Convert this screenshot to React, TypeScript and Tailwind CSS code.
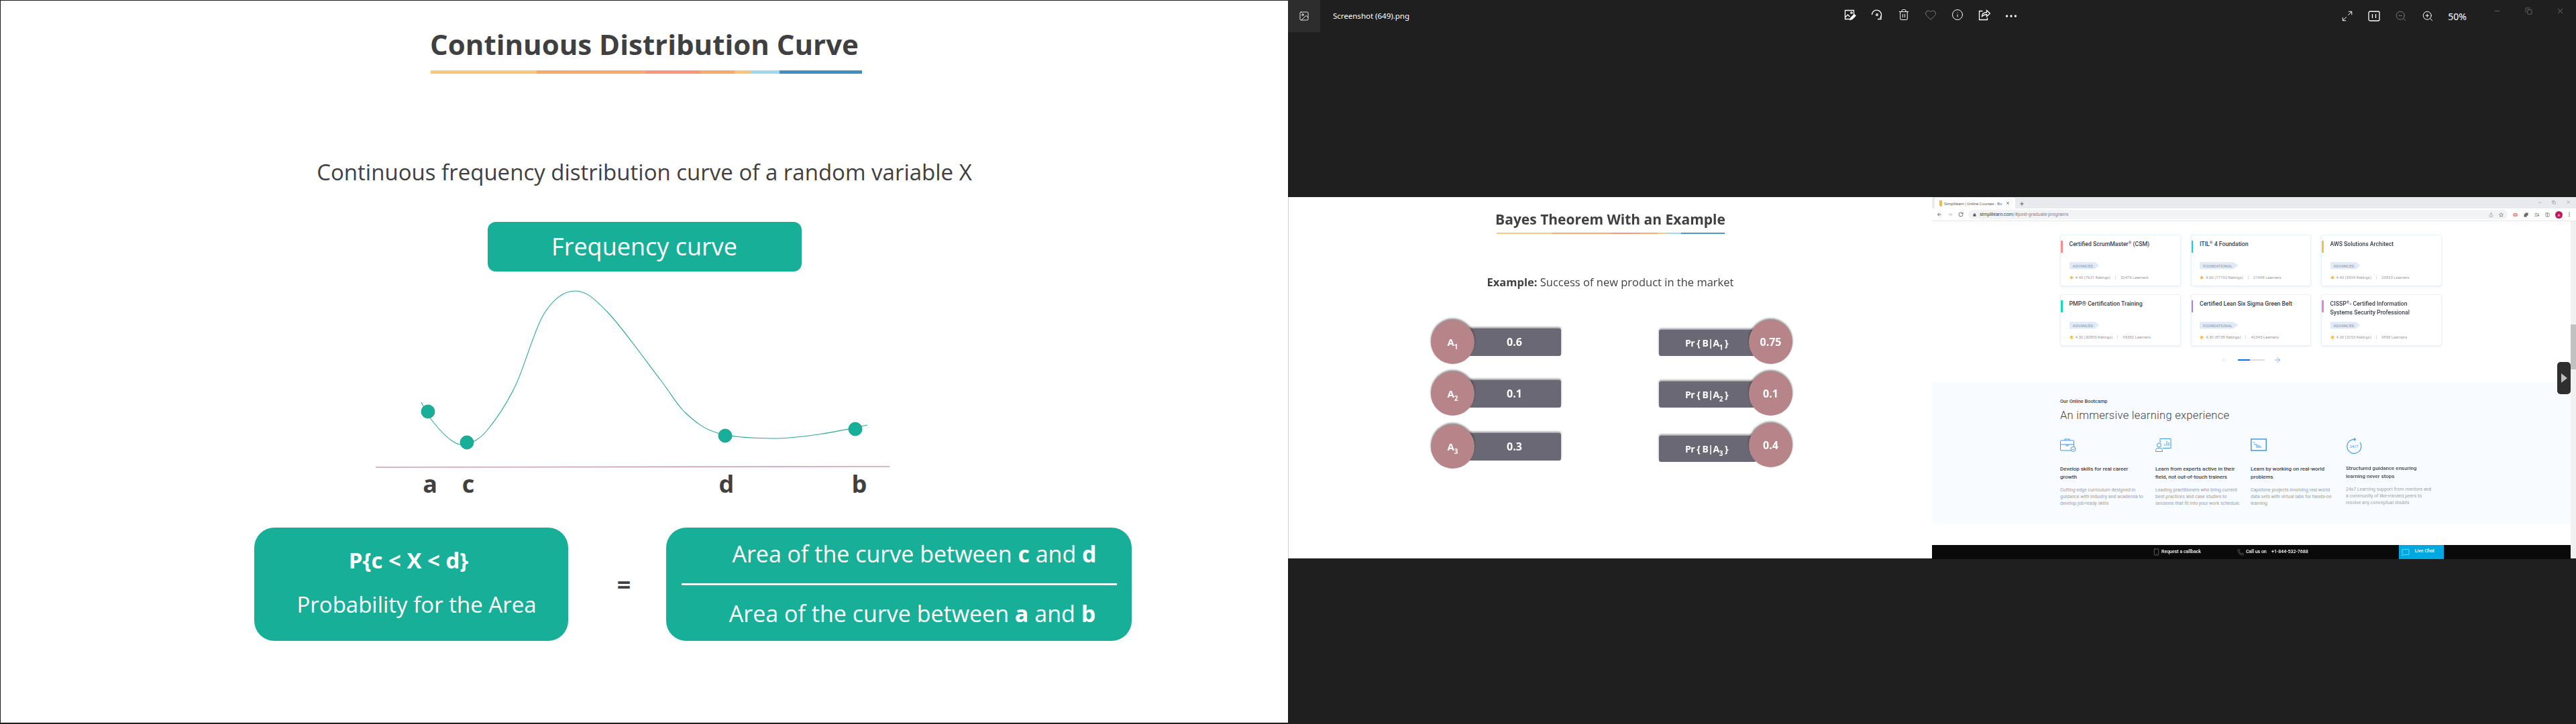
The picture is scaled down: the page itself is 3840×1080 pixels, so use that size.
import {
  ArrowLeft,
  ArrowRight,
  Columns2,
  Copy,
  Ellipsis,
  Heart,
  Image,
  Info,
  ListMusic,
  Lock,
  Maximize2,
  MessageSquare,
  Minus,
  MoreVertical,
  Phone,
  Plus,
  Puzzle,
  RotateCw,
  Share,
  Smartphone,
  Star,
  Trash2,
  X,
  ZoomIn,
  ZoomOut,
} from 'lucide-react';

const underlineBig = [
  ['w-[158px]', 'bg-[#fdc578]'],
  ['w-[162px]', 'bg-[#fba86c]'],
  ['w-[82px]', 'bg-[#fd9577]'],
  ['w-[51px]', 'bg-[#fba86c]'],
  ['w-[25px]', 'bg-[#fdc578]'],
  ['w-[42px]', 'bg-[#a0d8ee]'],
  ['w-[123px]', 'bg-[#3f8fc0]'],
];

const underlineSmall = [
  ['w-[83px]', 'bg-[#fdc578]'],
  ['w-[88px]', 'bg-[#fba86c]'],
  ['w-[42px]', 'bg-[#fd9577]'],
  ['w-[27px]', 'bg-[#fba86c]'],
  ['w-[13px]', 'bg-[#fdc578]'],
  ['w-[22px]', 'bg-[#a0d8ee]'],
  ['w-[65px]', 'bg-[#4a9acb]'],
];

const curvePoints = [
  [627, 600], [642, 626], [672, 657], [695, 662], [725, 642], [767, 576], [810, 468], [856, 434],
  [905, 466], [983, 566], [1021, 616], [1069, 646], [1150, 654], [1222, 647.5], [1292, 634],
];

// catmull-rom through the points read off the picture
function smooth(pts: number[][]) {
  let d = `M${pts[0][0]} ${pts[0][1]}`;
  for (let i = 0; i < pts.length - 1; i++) {
    const p0 = pts[Math.max(i - 1, 0)];
    const p1 = pts[i];
    const p2 = pts[i + 1];
    const p3 = pts[Math.min(i + 2, pts.length - 1)];
    const c1x = p1[0] + (p2[0] - p0[0]) / 6;
    const c1y = p1[1] + (p2[1] - p0[1]) / 6;
    const c2x = p2[0] - (p3[0] - p1[0]) / 6;
    const c2y = p2[1] - (p3[1] - p1[1]) / 6;
    d += ` C${c1x} ${c1y} ${c2x} ${c2y} ${p2[0]} ${p2[1]}`;
  }
  return d;
}

const dots = [
  [637, 614],
  [695, 660],
  [1080, 650],
  [1274, 640],
];

function Sub({ n }: { n: number }) {
  return <sub className="text-[10px] leading-none align-[-3px]">{n}</sub>;
}

function EditImageIcon() {
  return (
    <svg width="18" height="18" viewBox="0 0 18 18" fill="none" stroke="currentColor" strokeWidth="1.3">
      <path d="M9 15.5H1.5v-13h13V8" />
      <path d="M1.5 13l4-4 3 3" />
      <circle cx="11" cy="6" r="1.2" />
      <path d="M9 16.5l1-3 5-5 2 2-5 5z" fill="currentColor" />
    </svg>
  );
}

function RotateIcon() {
  return (
    <svg width="18" height="18" viewBox="0 0 18 18" fill="none" stroke="currentColor" strokeWidth="1.3">
      <path d="M1.5 9a7 7 0 1 1 12 5" />
      <path d="M15 10.5v5h-5" />
      <circle cx="9" cy="9" r="1.3" />
    </svg>
  );
}

function ShareIcon() {
  return (
    <svg width="18" height="18" viewBox="0 0 18 18" fill="none" stroke="currentColor" strokeWidth="1.3">
      <path d="M6.5 3.5h-5v13h12v-3" />
      <path d="M5.5 11.5c0-4 3-6 7-6V2.5l5 4.5-5 4.5V8.5c-3 0-5 1-7 3z" />
    </svg>
  );
}

function FitIcon() {
  return (
    <svg width="18" height="18" viewBox="0 0 18 18" fill="none" stroke="currentColor" strokeWidth="1.3">
      <rect x="1" y="2" width="16" height="14" rx="2" />
      <path d="M6.5 6v6M11.5 6v6" />
    </svg>
  );
}

const bayesLeft = [
  { n: 1, v: '0.6', cls: 'mt-[42px]' },
  { n: 2, v: '0.1', cls: 'mt-[11px]' },
  { n: 3, v: '0.3', cls: 'mt-[13px]' },
];

const bayesRight = [
  { n: 1, v: '0.75', cls: 'mt-[42px]', barCls: 'translate-y-[1px]' },
  { n: 2, v: '0.1', cls: 'mt-[11px]', barCls: 'translate-y-[1px]' },
  { n: 3, v: '0.4', cls: 'mt-[11px]', barCls: 'translate-y-[5px]' },
];

const courses = [
  { title: <>Certified ScrumMaster<sup className="text-[6px]">®</sup> (CSM)</>, level: 'ADVANCED', rating: '4.40 (7621 Ratings)', learners: '32476 Learners', accent: 'bg-[#fc8c8c]' },
  { title: <>ITIL<sup className="text-[6px]">®</sup> 4 Foundation</>, level: 'FOUNDATIONAL', rating: '4.60 (17192 Ratings)', learners: '21498 Learners', accent: 'bg-[#10cfe8]' },
  { title: <>AWS Solutions Architect</>, level: 'ADVANCED', rating: '4.40 (5594 Ratings)', learners: '23833 Learners', accent: 'bg-[#f5c242]' },
  { title: <>PMP® Certification Training</>, level: 'ADVANCED', rating: '4.30 (30895 Ratings)', learners: '95382 Learners', accent: 'bg-[#10dcb8]' },
  { title: <>Certified Lean Six Sigma Green Belt</>, level: 'FOUNDATIONAL', rating: '4.30 (8738 Ratings)', learners: '42345 Learners', accent: 'bg-[#a67cf0]' },
  { title: <>CISSP<sup className="text-[6px]">®</sup>- Certified Information<br />Systems Security Professional</>, level: 'ADVANCED', rating: '4.30 (3253 Ratings)', learners: '9858 Learners', accent: 'bg-[#ef7fd5]' },
];

const features = [
  {
    title: 'Develop skills for real career growth',
    text: 'Cutting-edge curriculum designed in guidance with industry and academia to develop job-ready skills',
    icon: (
      <svg width="24" height="20" viewBox="0 0 24 20" fill="none" stroke="#3d9be9" strokeWidth="1">
        <rect x="0.5" y="3" width="20" height="15" rx="1" />
        <path d="M7 3V1h7v2M0.5 9h20M9 9v2h3V9" />
        <circle cx="19.5" cy="16" r="3.5" fill="#f8fbff" />
        <path d="M18 16l1.2 1.2 2-2.2" />
      </svg>
    ),
  },
  {
    title: 'Learn from experts active in their field, not out-of-touch trainers',
    text: 'Leading practitioners who bring current best practices and case studies to sessions that fit into your work schedule.',
    icon: (
      <svg width="24" height="20" viewBox="0 0 24 20" fill="none" stroke="#3d9be9" strokeWidth="1">
        <path d="M7 0.5h16v14H11" />
        <path d="M7 0.5v6M14 11V8M17 11V4M20 11V6" />
        <circle cx="5.5" cy="10" r="3" />
        <path d="M0.5 19.5v-2c0-2 2-3 5-3s5 1 5 3v2z" />
      </svg>
    ),
  },
  {
    title: 'Learn by working on real-world problems',
    text: 'Capstone projects involving real world data sets with virtual labs for hands-on learning',
    icon: (
      <svg width="24" height="20" viewBox="0 0 24 20" fill="none" stroke="#3d9be9">
        <rect x="0.75" y="1" width="22.5" height="17" strokeWidth="1.5" />
        <path d="M4 6h2M5 9h5M8 11h6M8 13h8" strokeWidth="1" />
      </svg>
    ),
  },
  {
    title: 'Structured guidance ensuring learning never stops',
    text: '24x7 Learning support from mentors and a community of like-minded peers to resolve any conceptual doubts',
    icon: (
      <svg width="24" height="24" viewBox="0 0 24 24" fill="none" stroke="#3d9be9" strokeWidth="1.2" className="-mt-[1px]">
        <path d="M14 2.5A10.5 10.5 0 1 0 21 7" />
        <path d="M12 0.5l2.5 2-2 2.2" />
        <text x="12" y="14.5" textAnchor="middle" fontSize="6" fill="#3d9be9" stroke="none" fontFamily="Roboto">24/7</text>
      </svg>
    ),
  },
];

function Course({ c }: { c: (typeof courses)[number] }) {
  return (
    <div className="relative w-[179.5px] h-[77px] bg-white border border-[#e9f1fb] rounded-[3px] shadow-[0_1px_3px_rgba(120,160,220,0.2)] pl-[12.5px] pt-[7px]">
      <div className={`absolute left-0 top-[7.5px] w-[2.5px] h-[18px] ${c.accent}`} />
      <div className="h-[26px] text-[8.7px] leading-[13px] font-medium text-[#3a3f4a] pr-[20px]">{c.title}</div>
      <div className="mt-[6.5px] h-[11px] w-fit pl-[5px] pr-[9px] flex items-center bg-[#e0ebf7] text-[6px] text-[#8a94a6] [clip-path:polygon(0_0,85%_0,100%_50%,85%_100%,0_100%)]">
        {c.level}
      </div>
      <div className="mt-[8.5px] flex items-center text-[6px] leading-[8px] text-[#9a9a9a]">
        <Star className="w-[6px] h-[6px] text-[#fbb93c] mr-[3px]" fill="#fbb93c" />
        <span>{c.rating}</span>
        <span className="mx-[7px] w-px h-[6px] bg-[#dcdcdc]" />
        <span>{c.learners}</span>
      </div>
    </div>
  );
}

export default function App() {
  return (
    <div className="flex w-[3840px] h-[1080px] overflow-hidden bg-[#1f1f1f] font-['Open_Sans',sans-serif]">
      {/* left slide */}
      <div className="w-[1920px] h-[1080px] shrink-0 bg-white border-l border-t border-b-2 border-[#1f1f1f] flex flex-col items-center text-[#404040]">
        <h1 className="mt-[35px] text-[42px] leading-[60px] font-bold">Continuous Distribution Curve</h1>
        <div className="self-start ml-[641px] mt-[9px] flex h-[5px]">
          {underlineBig.map(([w, c], i) => (
            <div key={i} className={`${w} ${c}`} />
          ))}
        </div>
        <p className="mt-[124px] text-[33px] leading-[46px]">Continuous frequency distribution curve of a random variable X</p>
        <div className="mt-[51px] w-[468px] h-[74px] rounded-[12px] bg-[#17af98] flex items-center justify-center text-white text-[36px]">
          Frequency curve
        </div>

        <svg width="1920" height="345" viewBox="0 405 1920 345" className="shrink-0">
          <path d={smooth(curvePoints)} fill="none" stroke="#2aa896" strokeWidth="1.1" />
          {dots.map(([x, y]) => (
            <circle key={x} cx={x} cy={y} r="10" fill="#17af98" stroke="#109582" strokeWidth="0.8" />
          ))}
          <line x1="559" y1="697" x2="1325" y2="696" stroke="#c9a3aa" strokeWidth="1.6" />
          <g fontFamily="Open Sans" fontWeight="700" fontSize="36" fill="#404040" textAnchor="middle">
            <text x="640" y="735">a</text>
            <text x="697" y="735">c</text>
            <text x="1082" y="735">d</text>
            <text x="1280" y="735">b</text>
          </g>
        </svg>

        <div className="self-start ml-[378px] mt-[37px] flex items-center text-white">
          <div className="w-[468px] h-[169px] rounded-[30px] bg-[#17af98] flex flex-col items-center text-[33px]">
            <div className="mt-[26px] h-[46px] leading-[46px] font-bold pr-[8px]">P{'{'}c &lt; X &lt; d{'}'}</div>
            <div className="mt-[20px] h-[46px] leading-[46px] pl-[16px]">Probability for the Area</div>
          </div>
          <div className="w-[146px] pl-[20px] text-center text-[36px] font-bold text-[#404040]">=</div>
          <div className="w-[694px] h-[169px] rounded-[30px] bg-[#17af98] flex flex-col items-center text-[34px]">
            <div className="mt-[16px] h-[46px] leading-[46px] pl-[46px]">
              Area of the curve between <b>c</b> and <b>d</b>
            </div>
            <div className="mt-[21px] w-[649px] h-[3px] bg-[#eafaf6]" />
            <div className="mt-[19px] h-[46px] leading-[46px] pl-[40px]">
              Area of the curve between <b>a</b> and <b>b</b>
            </div>
          </div>
        </div>
      </div>

      {/* photos viewer */}
      <div className="w-[1920px] h-[1080px] shrink-0 flex flex-col">
        <div className="h-[48px] flex items-center text-white shrink-0">
          <div className="w-[48px] h-[48px] bg-[#2d2d2d] flex items-center justify-center">
            <Image className="w-[16px] h-[16px]" strokeWidth={1.3} />
          </div>
          <div className="ml-[19px] w-[752px] text-[11.5px] font-['Noto_Sans',sans-serif] leading-[20px]">Screenshot (649).png</div>
          <div className="flex w-[280px]">
            <div className="w-[40px] flex justify-center"><EditImageIcon /></div>
            <div className="w-[40px] flex justify-center"><RotateIcon /></div>
            <div className="w-[40px] flex justify-center"><Trash2 className="w-[18px] h-[18px]" strokeWidth={1.3} /></div>
            <div className="w-[40px] flex justify-center"><Heart className="w-[18px] h-[18px] text-[#7a7a7a]" strokeWidth={1.3} /></div>
            <div className="w-[40px] flex justify-center"><Info className="w-[18px] h-[18px]" strokeWidth={1.3} /></div>
            <div className="w-[40px] flex justify-center"><ShareIcon /></div>
            <div className="w-[40px] flex justify-center"><Ellipsis className="w-[22px] h-[22px]" strokeWidth={1.6} /></div>
          </div>
          <div className="ml-[461px] flex w-[160px]">
            <div className="w-[40px] flex justify-center"><Maximize2 className="w-[18px] h-[18px]" strokeWidth={1.3} /></div>
            <div className="w-[40px] flex justify-center"><FitIcon /></div>
            <div className="w-[40px] flex justify-center"><ZoomOut className="w-[18px] h-[18px] text-[#7a7a7a]" strokeWidth={1.3} /></div>
            <div className="w-[40px] flex justify-center"><ZoomIn className="w-[18px] h-[18px]" strokeWidth={1.3} /></div>
          </div>
          <div className="w-[48px] text-center text-[14px] font-['Noto_Sans',sans-serif]">50%</div>
          <div className="ml-[12px] self-start h-[32px] flex items-center text-[#9a9a9a]">
            <div className="w-[47px] flex justify-center"><Minus className="w-[11px] h-[11px]" strokeWidth={1.2} /></div>
            <div className="w-[47px] flex justify-center"><Copy className="w-[11px] h-[11px]" strokeWidth={1.2} /></div>
            <div className="w-[47px] flex justify-center"><X className="w-[13px] h-[13px]" strokeWidth={1.2} /></div>
          </div>
        </div>

        <div className="mt-[246px] flex h-[539px] shrink-0">
          {/* bayes slide */}
          <div className="w-[960px] h-[539px] bg-white border-l border-[#d0d0d0] flex flex-col items-center text-[#404040] blur-[0.3px]">
            <div className="mt-[17px] h-[32px] text-[21px] leading-[32px] font-bold whitespace-nowrap">Bayes Theorem With an Example</div>
            <div className="mt-[4px] flex h-[2px]">
              {underlineSmall.map(([w, c], i) => (
                <div key={i} className={`${w} ${c}`} />
              ))}
            </div>
            <div className="mt-[58px] text-[16.5px] leading-[28px] whitespace-nowrap">
              <b>Example:</b> Success of new product in the market
            </div>
            <div className="self-start flex">
              <div className="ml-[212px] w-[195px] flex flex-col">
                {bayesLeft.map(r => (
                  <div key={r.n} className={`flex items-center h-[66px] ${r.cls}`}>
                    <div className="z-10 w-[65px] h-[66px] rounded-full bg-[#b78589] shadow-[0_-2px_3px_rgba(0,0,0,0.45)] flex items-center justify-center text-white font-bold text-[15px]">
                      <span>A<Sub n={r.n} /></span>
                    </div>
                    <div className="-ml-[10px] w-[139px] h-[41px] rounded-[3px] bg-[#6b6875] shadow-[0_-2px_3px_rgba(0,0,0,0.4)] flex items-center justify-center text-white font-bold text-[16px]">
                      {r.v}
                    </div>
                  </div>
                ))}
              </div>
              <div className="ml-[145px] w-[200px] flex flex-col">
                {bayesRight.map(r => (
                  <div key={r.n} className={`flex items-center h-[66px] ${r.cls}`}>
                    <div className={`w-[145px] h-[39px] rounded-[3px] bg-[#6b6875] shadow-[0_-2px_3px_rgba(0,0,0,0.4)] flex items-center pl-[39px] text-white font-bold text-[14px] tracking-[-0.5px] whitespace-nowrap ${r.barCls}`}>
                      <span>Pr {'{'} B|A<Sub n={r.n} /> {'}'}</span>
                    </div>
                    <div className="z-10 -ml-[11px] w-[65px] h-[66px] shrink-0 rounded-full bg-[#b78589] shadow-[0_-2px_3px_rgba(0,0,0,0.45)] flex items-center justify-center text-white font-bold text-[16px]">
                      {r.v}
                    </div>
                  </div>
                ))}
              </div>
            </div>
          </div>

          {/* browser screenshot */}
          <div className="w-[960px] h-[539px] flex flex-col bg-white font-['Roboto',sans-serif] blur-[0.35px]">
            <div className="h-[17px] bg-[#e8eaed] flex items-end shrink-0">
              <div className="ml-[4px] w-[120px] h-[16px] bg-white rounded-t-[4px] flex items-center pl-[7px] text-[6px] text-[#5f6368]">
                <span className="w-[4px] h-[9px] mr-[3px] rounded-b-[2px] border-x-2 border-b border-x-[#f5b942] border-b-[#6db7e8]" />
                <span className="w-[90px] whitespace-nowrap">Simplilearn | Online Courses - Bo</span>
                <X className="ml-[2px] w-[6px] h-[6px] text-[#45474a]" strokeWidth={3} />
              </div>
              <Plus className="ml-[6px] mb-[3px] w-[8px] h-[8px] text-[#45474a]" strokeWidth={2.5} />
              <div className="ml-auto flex items-center gap-[15px] pr-[8px] mb-[2px] text-[#7d7f83] self-center">
                <Minus className="w-[6px] h-[6px]" />
                <Copy className="w-[6px] h-[6px]" />
                <X className="w-[7px] h-[7px]" />
              </div>
            </div>
            <div className="h-[19px] flex items-center border-b border-[#e4e6e8] shrink-0">
              <ArrowLeft className="ml-[7px] w-[8px] h-[8px] text-[#55585c]" strokeWidth={2.5} />
              <ArrowRight className="ml-[8px] w-[8px] h-[8px] text-[#b6b8bc]" strokeWidth={2.5} />
              <RotateCw className="ml-[8px] w-[8px] h-[8px] text-[#55585c]" strokeWidth={2.5} />
              <div className="ml-[7px] w-[804px] h-[14px] rounded-full bg-[#f1f3f4] flex items-center pl-[7px] text-[7px] text-[#80868b]">
                <Lock className="w-[5px] h-[5px] text-[#55585c] mr-[5px]" fill="#55585c" />
                <span className="text-[#3c4043]">simplilearn.com</span>/#post-graduate-programs
                <Share className="ml-auto w-[7px] h-[7px]" />
                <Star className="ml-[8px] mr-[6px] w-[7px] h-[7px] text-[#45474a]" />
              </div>
              <div className="ml-[8px] flex items-center gap-[9px] text-[#55585c]">
                <span className="w-[7px] h-[5px] rounded-full border-2 border-[#f98a8a]" />
                <Puzzle className="w-[7px] h-[7px]" fill="#55585c" />
                <ListMusic className="w-[7px] h-[7px]" />
                <Columns2 className="w-[7px] h-[7px]" />
                <span className="w-[11px] h-[11px] -ml-[1px] rounded-full bg-[#c2185b] text-white text-[6px] flex items-center justify-center">A</span>
                <MoreVertical className="-ml-[3px] w-[8px] h-[8px]" />
              </div>
            </div>

            <div className="relative flex flex-1 min-h-0">
              <div className="w-[952px] flex flex-col">
                <div className="ml-[191px] mt-[20px] grid grid-cols-[179.5px_179.5px_179.5px] gap-x-[15px] gap-y-[12px]">
                  {courses.map((c, i) => (
                    <Course key={i} c={c} />
                  ))}
                </div>
                <div className="ml-[430px] mt-[15px] h-[12px] flex items-center">
                  <ArrowLeft className="w-[12px] h-[12px] text-[#c9dcf5]" strokeWidth={1.2} />
                  <div className="ml-[14px] w-[40px] h-[2px] bg-[#dddddd]">
                    <div className="w-[18px] h-[2px] bg-[#0a6fe8]" />
                  </div>
                  <ArrowRight className="ml-[13px] w-[12px] h-[12px] text-[#1e80f0]" strokeWidth={1.2} />
                </div>
                <div className="mt-[27px] h-[211px] bg-[#f8fbff] pl-[191px] pt-[24px] shrink-0">
                  <div className="text-[7.4px] leading-[10px] font-medium text-[#444]">Our Online Bootcamp</div>
                  <div className="mt-[5px] text-[16.5px] leading-[22px] font-light tracking-[0.3px] text-[#444]">An immersive learning experience</div>
                  <div className="mt-[23px] grid grid-cols-[142px_142px_142px_142px]">
                    {features.map(f => (
                      <div key={f.title} className="pr-[14px]">
                        <div className="h-[20px]">{f.icon}</div>
                        <div className="mt-[20px] text-[8px] leading-[12px] font-medium text-[#444]">{f.title}</div>
                        <div className="mt-[8px] text-[7px] leading-[10px] text-[#a0a0a0]">{f.text}</div>
                      </div>
                    ))}
                  </div>
                </div>
                <div className="h-[32px] shrink-0" />
                <div className="h-[21px] bg-[#0a0a0a] flex items-center text-white text-[7px] font-medium shrink-0 pl-[329px] whitespace-nowrap">
                  <Smartphone className="w-[11px] h-[13px] text-[#bbb]" strokeWidth={1} />
                  <span className="ml-[2px] w-[55px]">Request a callback</span>
                  <Phone className="ml-[58px] w-[10px] h-[10px] text-[#bbb]" strokeWidth={1} />
                  <span className="ml-[3px] w-[29px]">Call us on</span>
                  <span className="ml-[9px] w-[50px]">+1-844-532-7688</span>
                  <div className="ml-[140px] w-[67px] h-[21px] bg-[#00a8e1] flex items-center pl-[4px]">
                    <MessageSquare className="w-[12px] h-[12px]" strokeWidth={1} />
                    <span className="ml-[8px] mb-[2px]">Live Chat</span>
                  </div>
                </div>
              </div>
              <div className="w-[8px] bg-[#f1f1f1] flex flex-col items-center">
                <div className="mt-[154px] w-[8px] h-[67px] bg-[#c1c1c1]" />
              </div>
              {/* floating side tab */}
              <div className="absolute left-[932px] top-[210px] w-[20px] h-[48px] rounded-[5px] bg-[#2f2f2f] flex items-center justify-center">
                <span className="w-0 h-0 border-y-[7px] border-y-transparent border-l-[9px] border-l-[#bdbdbd]" />
              </div>
            </div>
          </div>
        </div>
      </div>
    </div>
  );
}
